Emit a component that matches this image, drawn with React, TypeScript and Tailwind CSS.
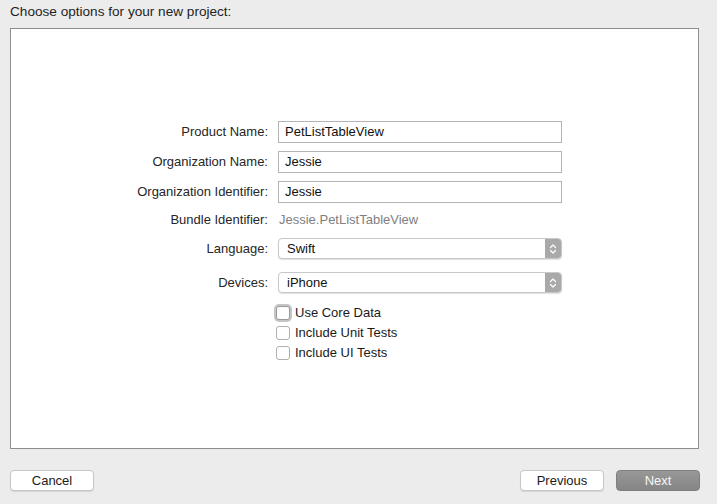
import React from "react";

function TextRow({ label, value, mt }: { label: string; value: string; mt: string }) {
  return (
    <div className={`flex items-center ${mt}`}>
      <div className="w-[267px] text-right text-[13px] text-[#262626] pr-[10px]">{label}</div>
      <div className="w-[284px] h-[22px] bg-white border border-[#b4b4b4] flex items-center px-[6px] text-[13px] text-[#111]">
        {value}
      </div>
    </div>
  );
}

function PopupRow({ label, value, mt }: { label: string; value: string; mt: string }) {
  return (
    <div className={`flex items-center ${mt}`}>
      <div className="w-[267px] text-right text-[13px] text-[#262626] pr-[10px]">{label}</div>
      <div className="w-[284px] h-[21px] bg-white border border-[#c8c8c8] rounded-[4px] shadow-[0_1px_1px_rgba(0,0,0,0.12)] flex items-center overflow-hidden">
        <div className="flex-1 px-[8px] text-[13px] text-[#111]">{value}</div>
        <div className="w-[16px] h-full bg-[#a9a9a9] flex items-center justify-center">
          <svg width="8" height="12" viewBox="0 0 8 12" fill="none">
            <path d="M1.5 4.5 L4 2 L6.5 4.5" stroke="white" strokeWidth="1.2" strokeLinecap="round" strokeLinejoin="round" />
            <path d="M1.5 7.5 L4 10 L6.5 7.5" stroke="white" strokeWidth="1.2" strokeLinecap="round" strokeLinejoin="round" />
          </svg>
        </div>
      </div>
    </div>
  );
}

function CheckRow({ label, focused }: { label: string; focused?: boolean }) {
  return (
    <div className="flex items-center h-[20px] pl-[265px]">
      <div
        className={`w-[14px] h-[14px] bg-white rounded-[3px] border ${
          focused ? "border-[#9a9a9a] shadow-[0_0_0_2px_rgba(150,150,150,0.55)]" : "border-[#b0b0b0]"
        }`}
      />
      <span className="ml-[5px] text-[13px] text-[#1a1a1a]">{label}</span>
    </div>
  );
}

export default function App() {
  return (
    <div
      className="w-[717px] h-[504px] bg-[#ececec] flex flex-col"
      style={{ fontFamily: '"Liberation Sans", Arial, sans-serif' }}
    >
      <div className="h-[28px] pl-[10px] pt-[4px] text-[13.6px] text-[#1f1f1f] leading-[16px]">
        Choose options for your new project:
      </div>
      <div className="ml-[10px] w-[689px] h-[421px] bg-white border border-[#8e8e8e] flex flex-col pt-[92px]">
        <TextRow label="Product Name:" value="PetListTableView" mt="mt-0" />
        <TextRow label="Organization Name:" value="Jessie" mt="mt-[8px]" />
        <TextRow label="Organization Identifier:" value="Jessie" mt="mt-[8px]" />
        <div className="flex items-center h-[20px] mt-[7px]">
          <div className="w-[267px] text-right text-[13px] text-[#262626] pr-[10px]">Bundle Identifier:</div>
          <div className="text-[13px] text-[#808080] pl-[1px]">Jessie.PetListTableView</div>
        </div>
        <PopupRow label="Language:" value="Swift" mt="mt-[8px]" />
        <PopupRow label="Devices:" value="iPhone" mt="mt-[13px]" />
        <div className="mt-[10px] flex flex-col">
          <CheckRow label="Use Core Data" focused />
          <CheckRow label="Include Unit Tests" />
          <CheckRow label="Include UI Tests" />
        </div>
      </div>
      <div className="flex items-center mt-[21px] pl-[10px] pr-[17px]">
        <button className="w-[84px] h-[21px] bg-white border border-[#c6c6c6] rounded-[4px] shadow-[0_1px_1px_rgba(0,0,0,0.1)] text-[13px] text-[#1a1a1a] flex items-center justify-center">
          Cancel
        </button>
        <div className="flex-1" />
        <button className="w-[84px] h-[21px] bg-white border border-[#c6c6c6] rounded-[4px] shadow-[0_1px_1px_rgba(0,0,0,0.1)] text-[13px] text-[#1a1a1a] flex items-center justify-center">
          Previous
        </button>
        <button className="ml-[12px] w-[84px] h-[21px] bg-gradient-to-b from-[#989898] to-[#858585] border border-[#7f7f7f] rounded-[4px] text-[13px] text-[#f7f7f7] flex items-center justify-center">
          Next
        </button>
      </div>
    </div>
  );
}
